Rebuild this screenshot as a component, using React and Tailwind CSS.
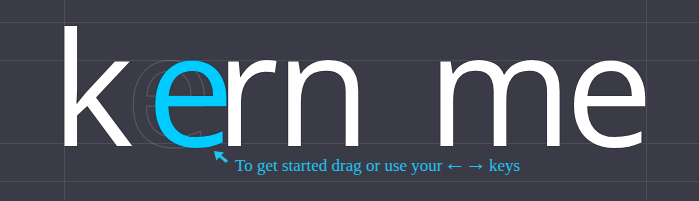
import React from 'react';

const Letter = ({ children, className = '' }) => (
  <span className={`inline-block text-white [text-shadow:0_0_1px_rgba(0,0,0,0.9),0_0_1px_rgba(0,0,0,0.9)] ${className}`}>
    {children}
  </span>
);

const App = () => {
  return (
    <div className="relative w-[699px] h-[201px] overflow-hidden bg-[#3b3b48] font-['Open_Sans',sans-serif]">
      {/* guide lines */}
      <div className="absolute left-0 right-0 top-[22px] h-px bg-[#4e4e5b]"></div>
      <div className="absolute left-0 right-0 top-[60px] h-px bg-[#4e4e5b]"></div>
      <div className="absolute left-0 right-0 top-[143px] h-px bg-[#4e4e5b]"></div>
      <div className="absolute left-0 right-0 top-[181px] h-px bg-[#4e4e5b]"></div>
      <div className="absolute top-0 bottom-0 left-[64px] w-px bg-[#4e4e5b]"></div>
      <div className="absolute top-0 bottom-0 left-[646px] w-px bg-[#4e4e5b]"></div>

      <div className="relative flex flex-col">
        <div className="flex items-baseline pl-[51px] pt-[7px] text-[157px] leading-none whitespace-pre">
          <Letter>k</Letter>
          <span className="relative inline-block ml-[13px]">
            <span className="absolute left-[-22px] top-0 text-transparent [-webkit-text-stroke:1px_rgba(255,255,255,0.16)]">e</span>
            <span className="relative text-[#00ccff] [text-shadow:0_0_1px_rgba(0,0,0,0.9)]">e</span>
          </span>
          <Letter className="-ml-[20px]">r</Letter>
          <Letter className="-ml-[4px]">n</Letter>
          <Letter> </Letter>
          <Letter className="ml-[15px]">m</Letter>
          <Letter className="-ml-[7px]">e</Letter>
        </div>

        <div className="flex items-start pl-[214px] -mt-[8px] text-[#1ec6f2] font-['Liberation_Serif',serif] text-[17px] leading-[20px]">
          <svg width="15" height="12" viewBox="0 0 15 12" className="mr-[6px] -mt-[5px] shrink-0">
            <path d="M0 0 L10 1.5 L7.2 4.3 L14 9.5 L12 12 L5.3 6.3 L2.3 9.5 Z" fill="#1ec6f2" />
          </svg>
          <span className="w-[200px] shrink-0 whitespace-nowrap">To get started drag or use your</span>
          <span className="ml-[9px] -mt-[3px] w-[16px] text-center text-[22px] leading-[20px]">←</span>
          <span className="ml-[5px] -mt-[3px] w-[16px] text-center text-[22px] leading-[20px]">→</span>
          <span className="ml-[8px]">keys</span>
        </div>
      </div>
    </div>
  );
};

export default App;
